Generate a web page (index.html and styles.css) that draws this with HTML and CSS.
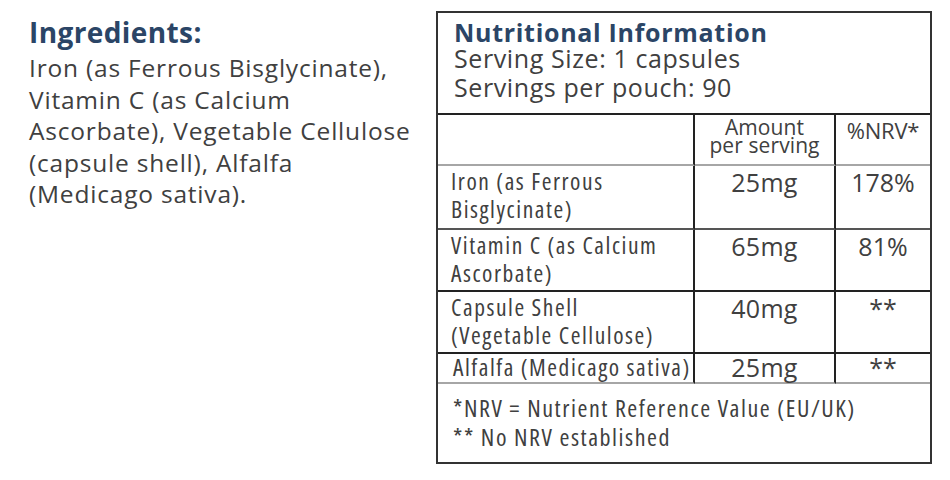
FILE: index.html
```html
<!DOCTYPE html>
<html lang="en">
<head>
<meta charset="utf-8">
<title>Ingredients &amp; Nutritional Information</title>
<link rel="stylesheet" href="styles.css">
</head>
<body>
<div class="page">
  <section class="ingredients">
    <h2 class="ing-title">Ingredients:</h2>
    <p class="ing-text">Iron (as Ferrous Bisglycinate),<br>Vitamin C (as Calcium<br>Ascorbate), Vegetable Cellulose<br>(capsule shell), Alfalfa<br>(Medicago sativa).</p>
  </section>
  <section class="panel">
    <div class="panel-head">
      <h2 class="panel-title">Nutritional Information</h2>
      <p class="serving">Serving Size: 1 capsules</p>
      <p class="serving">Servings per pouch: 90</p>
    </div>
    <div class="grid">
      <div class="cell name row-h line-gray"></div>
      <div class="cell amt row-h line-gray"><span class="amt-head">Amount<br>per serving</span></div>
      <div class="cell nrv row-h line-gray"><span class="nrv-head">%NRV*</span></div>

      <div class="cell name row-1 line-mid">Iron (as Ferrous<br>Bisglycinate)</div>
      <div class="cell amt row-1 line-mid">25mg</div>
      <div class="cell nrv row-1 line-mid">178%</div>

      <div class="cell name row-2 line-dark">Vitamin C (as Calcium<br>Ascorbate)</div>
      <div class="cell amt row-2 line-dark">65mg</div>
      <div class="cell nrv row-2 line-dark">81%</div>

      <div class="cell name row-3 line-dark">Capsule Shell<br>(Vegetable Cellulose)</div>
      <div class="cell amt row-3 line-dark">40mg</div>
      <div class="cell nrv row-3 line-dark">**</div>

      <div class="cell name row-4 line-gray alfalfa">Alfalfa (Medicago sativa)</div>
      <div class="cell amt row-4 line-gray">25mg</div>
      <div class="cell nrv row-4 line-gray">**</div>
    </div>
    <div class="foot">
      <p class="foot-line">*NRV = Nutrient Reference Value (EU/UK)</p>
      <p class="foot-line">** No NRV established</p>
    </div>
  </section>
</div>
</body>
</html>
```
FILE: styles.css
```css
* { box-sizing: border-box; }
html, body { margin: 0; padding: 0; background: #fff; }
body {
  font-family: "Open Sans", "DejaVu Sans", sans-serif;
  color: #404040;
  width: 950px;
  height: 480px;
}
.page {
  display: flex;
  align-items: flex-start;
  padding-top: 11px;
}
.ingredients {
  width: 436px;
  padding-left: 29px;
  padding-top: 4px;
}
.ing-title {
  margin: 0;
  font-size: 28px;
  line-height: 34px;
  font-weight: 700;
  letter-spacing: 0.4px;
  color: #2b4566;
}
.ing-text {
  margin: 3px 0 0;
  font-size: 24.5px;
  line-height: 31.5px;
  letter-spacing: 0.8px;
}
.panel {
  width: 496px;
  height: 453px;
  border: 2px solid #333;
  display: flex;
  flex-direction: column;
}
.panel-head {
  padding: 8px 0 11px 16px;
  border-bottom: 2px solid #222;
}
.panel-title {
  margin: 0;
  font-size: 25px;
  line-height: 23px;
  font-weight: 700;
  letter-spacing: 0.7px;
  color: #2b4566;
}
.serving {
  margin: 0;
  font-size: 25px;
  line-height: 29px;
  letter-spacing: 0.6px;
}
.grid {
  display: grid;
  grid-template-columns: 257px 141px 1fr;
  grid-template-rows: 51px 64px 62px 62px 30px;
}
.cell {
  font-size: 23.5px;
  line-height: 28px;
  font-stretch: 75%;
  letter-spacing: 1.55px;
  white-space: nowrap;
}
.name {
  padding: 1px 0 0 13px;
  border-right: 2px solid #222;
}
.amt {
  border-right: 2px solid #222;
  text-align: center;
  font-size: 25px;
  font-stretch: 100%;
  letter-spacing: 0.3px;
  padding-top: 2px;
}
.nrv {
  text-align: center;
  font-size: 25px;
  font-stretch: 100%;
  letter-spacing: 0;
  padding-top: 2px;
}
.amt-head {
  display: block;
  font-size: 21px;
  line-height: 18px;
  letter-spacing: 0.1px;
  padding-top: 1px;
}
.nrv-head {
  display: block;
  font-size: 22px;
  line-height: 28px;
  letter-spacing: -0.2px;
  margin-top: -1px;
}
.row-4 { padding-top: 0; line-height: 26px; }
.alfalfa { padding-left: 15px; }
.line-gray { border-bottom: 2px solid #a6a6a6; }
.line-mid { border-bottom: 2px solid #555; }
.line-dark { border-bottom: 2px solid #222; }
.foot {
  padding: 10px 0 0 15px;
}
.foot-line {
  margin: 0;
  font-size: 24px;
  line-height: 28.5px;
  font-stretch: 75%;
  letter-spacing: 1.55px;
}
```
